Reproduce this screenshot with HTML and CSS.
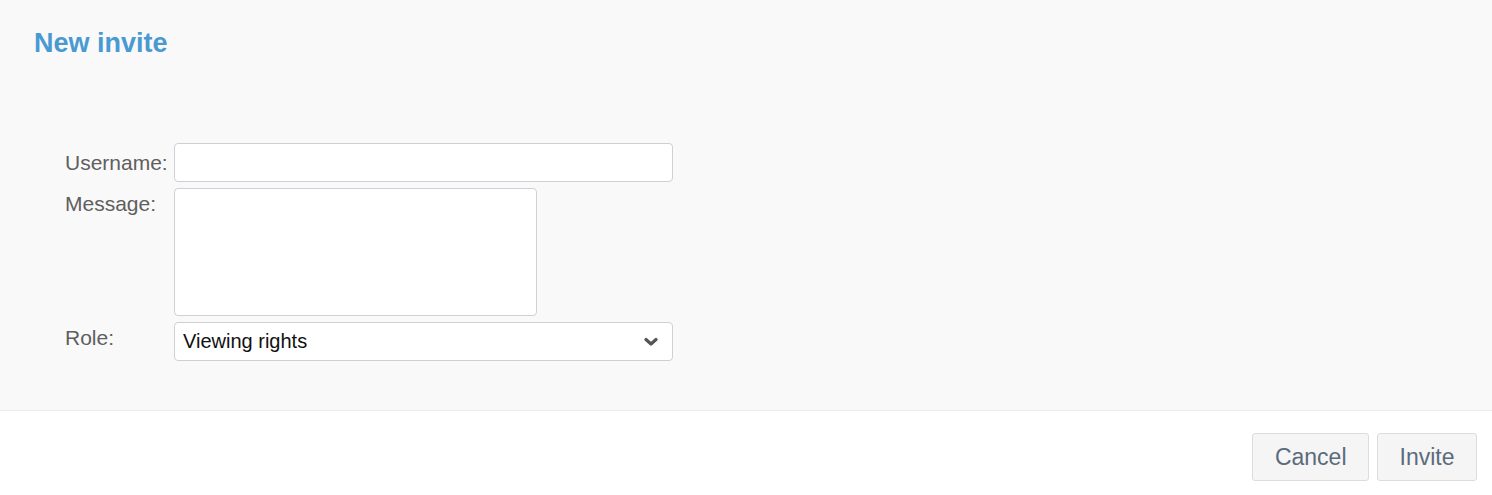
FILE: index.html
```html
<!DOCTYPE html>
<html>
<head>
<meta charset="utf-8">
<link rel="stylesheet" href="styles.css">
</head>
<body>
<div class="dialog">
  <div class="content">
    <h1 class="title">New invite</h1>
    <form class="form">
      <label class="label label-center" for="u">Username:</label>
      <input class="input" id="u" type="text">
      <label class="label" for="m">Message:</label>
      <textarea class="textarea" id="m"></textarea>
      <label class="label" for="r">Role:</label>
      <div class="select">
        <span class="select-text">Viewing rights</span>
        <svg class="chevron" width="14" height="10" viewBox="0 0 14 10"><path d="M2 2.5 L7 7 L12 2.5" fill="none" stroke="#555" stroke-width="3.2" stroke-linecap="round" stroke-linejoin="round"/></svg>
      </div>
    </form>
  </div>
  <div class="footer">
    <button class="btn" type="button">Cancel</button>
    <button class="btn" type="button">Invite</button>
  </div>
</div>
</body>
</html>
```
FILE: styles.css
```css
html, body {
  margin: 0;
  padding: 0;
  background: #ffffff;
  font-family: "Liberation Sans", Arial, sans-serif;
}
.dialog {
  width: 1492px;
  height: 495px;
  display: flex;
  flex-direction: column;
}
.content {
  background: #f9f9f9;
  height: 411px;
  box-sizing: border-box;
  border-bottom: 1px solid #ececec;
  padding: 28px 0 0 34px;
}
.title {
  margin: 0;
  font-size: 27px;
  line-height: 31px;
  font-weight: bold;
  color: #4a9ad2;
}
.form {
  margin: 84px 0 0 31px;
  display: grid;
  grid-template-columns: 109px auto;
  justify-content: start;
  row-gap: 6px;
  align-items: start;
}
.label {
  font-size: 21px;
  line-height: 24px;
  color: #5f5f5f;
  padding-top: 4px;
}
.label-center {
  align-self: center;
  padding-top: 0;
}
.input, .textarea, .select {
  box-sizing: border-box;
  border: 1px solid #cfcfd6;
  border-radius: 4px;
  background: #ffffff;
  margin: 0;
  font-family: inherit;
}
.input {
  width: 499px;
  height: 39px;
}
.textarea {
  width: 363px;
  height: 128px;
  resize: none;
  display: block;
}
.select {
  width: 499px;
  height: 39px;
  display: flex;
  align-items: center;
  justify-content: space-between;
  padding: 0 14px 0 8px;
}
.select-text {
  font-size: 20px;
  color: #111;
}
.chevron {
  display: block;
}
.footer {
  flex: 1;
  display: flex;
  justify-content: flex-end;
  align-items: flex-start;
  gap: 8px;
  padding: 22px 15px 0 0;
}
.btn {
  height: 48px;
  padding: 0 21.5px;
  font-family: inherit;
  font-size: 23px;
  color: #5b6b7c;
  background: #f5f5f5;
  border: 1px solid #d9dde2;
  border-radius: 3px;
}
```
